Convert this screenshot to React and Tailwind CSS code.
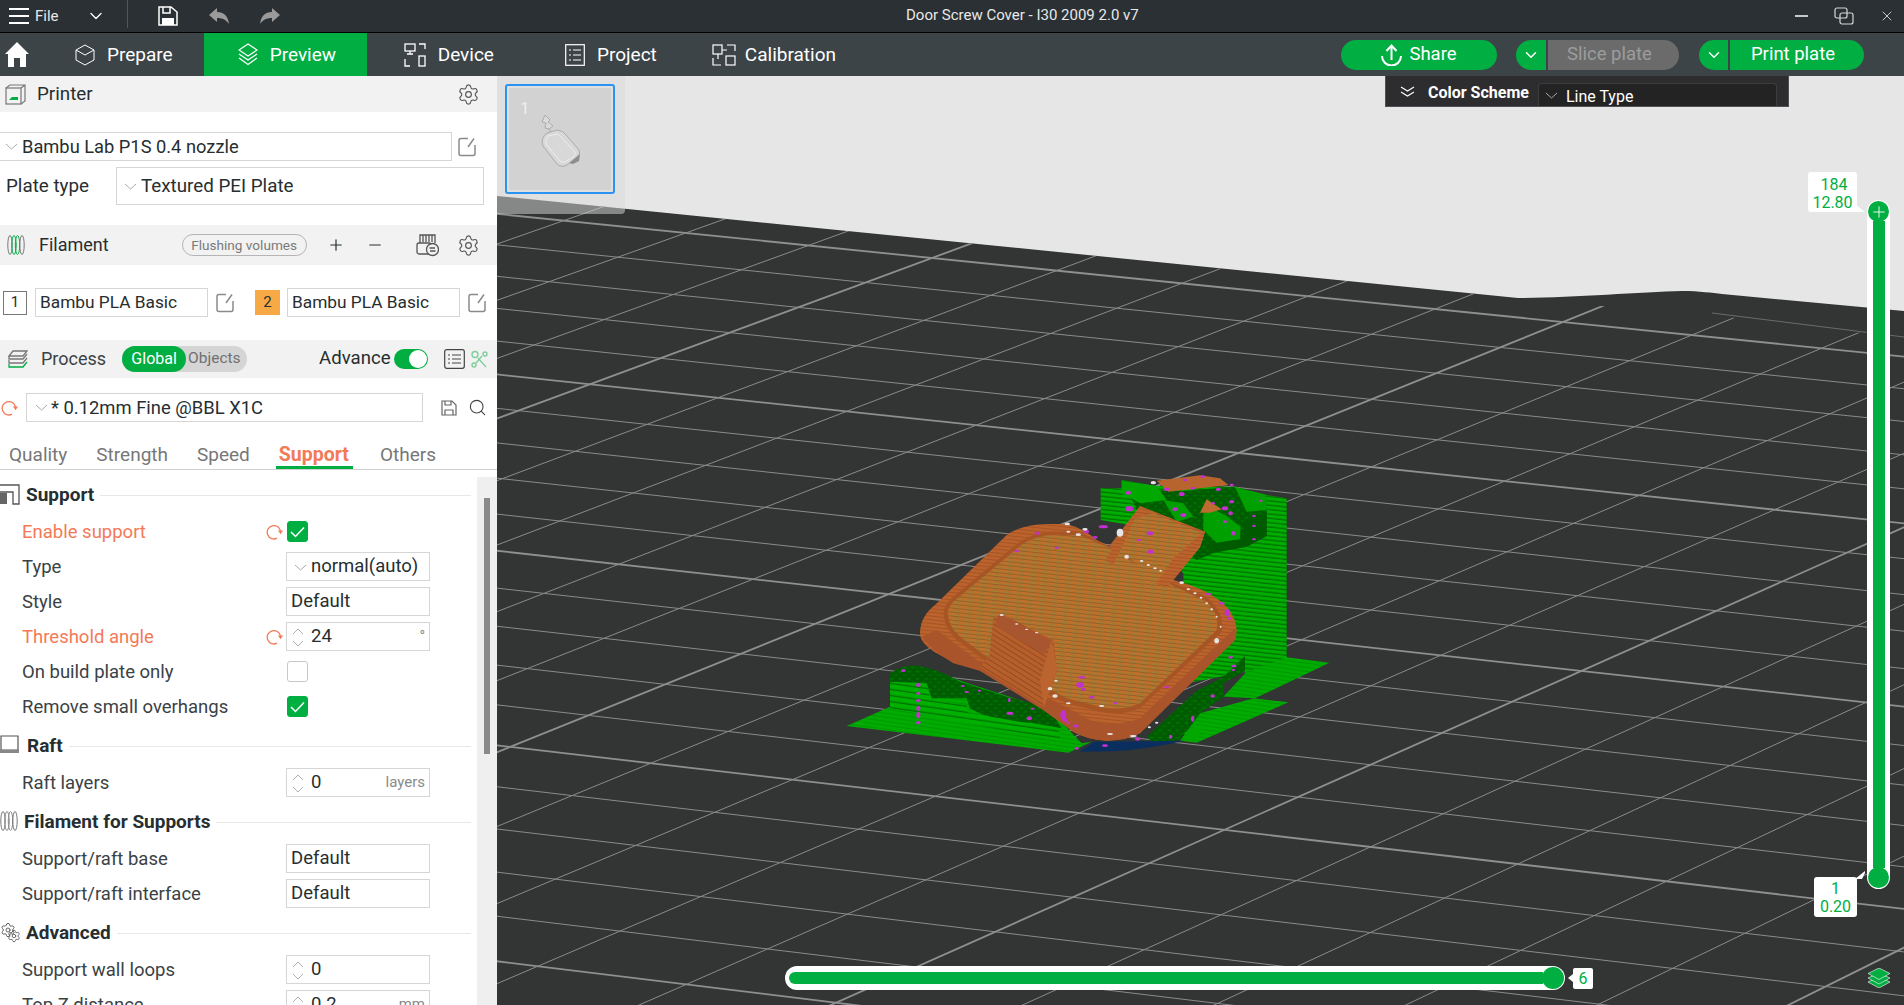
import React from 'react';
import { Settings, Search, Plus, Minus, ChevronDown, X } from 'lucide-react';

// floor grid: projective map fitted to the thick grid crossings, U/V count 5 cells
const project = (u, v) => {
    const U = u / 5;
    const V = v / 5;
    const w = 1 - 0.01708 * U - 0.03577 * V;
    return [(604.3 * U - 363.2 * V + 932) / w, (58.5 * U + 112.5 * V + 258) / w];
};

const gridLines = [];
for (let v = 0; v <= 36; v++) {
    const [x1, y1] = project(-30, v);
    const [x2, y2] = project(45, v);
    gridLines.push({ x1, y1, x2, y2, thick: v % 5 === 0 });
}
for (let u = -30; u <= 45; u++) {
    const [x1, y1] = project(u, -3);
    const [x2, y2] = project(u, 36);
    gridLines.push({ x1, y1, x2, y2, thick: u % 5 === 0 });
}

const magentaDots = [
    [925, 128, 8, 6], [928, 176, 12, 8], [1095, 90, 7, 4], [1148, 80, 7, 4], [1040, 118, 9, 5], [1085, 132, 9, 6], [1118, 115, 7, 4],
    [1195, 118, 8, 5], [1235, 105, 6, 4], [1235, 155, 8, 5], [1215, 175, 10, 6], [1180, 160, 5, 4], [1065, 178, 8, 6], [1090, 195, 9, 6],
    [1232, 190, 7, 6], [1215, 215, 6, 4], [1240, 250, 6, 7], [1302, 198, 6, 3], [1302, 228, 6, 3], [1302, 268, 6, 3], [1322, 152, 6, 3],
    [850, 230, 14, 5], [800, 245, 8, 5], [825, 262, 8, 4], [990, 250, 10, 6], [957, 270, 8, 3], [992, 305, 9, 6], [652, 250, 8, 4],
    [590, 303, 7, 4], [710, 293, 7, 3], [1165, 432, 10, 3], [1205, 460, 9, 4], [1222, 488, 8, 10], [1228, 505, 5, 5],
    [785, 682, 10, 4], [780, 705, 11, 8], [790, 718, 8, 4], [815, 742, 9, 4], [730, 795, 9, 14], [735, 810, 8, 5], [768, 828, 8, 5],
    [745, 818, 6, 3], [1040, 712, 8, 3], [886, 760, 6, 3], [1232, 622, 7, 4], [1242, 648, 8, 4], [1240, 660, 6, 3], [1178, 738, 7, 5],
    [1118, 806, 5, 9], [1052, 860, 5, 6], [953, 867, 8, 5], [855, 887, 9, 4], [770, 895, 6, 4],
    [295, 705, 7, 6], [295, 730, 6, 4], [295, 752, 7, 5], [295, 775, 6, 8], [295, 795, 6, 10], [295, 818, 7, 5], [250, 662, 7, 4],
    [428, 708, 6, 3], [440, 726, 7, 3], [568, 750, 4, 7], [570, 790, 11, 5], [628, 805, 8, 6], [638, 776, 6, 3], [478, 722, 5, 3]
];

const whiteDots = [
    [1000, 98, 8, 5], [900, 248, 10, 12], [742, 222, 8, 4], [795, 238, 8, 4], [775, 254, 8, 4], [745, 245, 6, 3], [920, 320, 7, 6],
    [965, 333, 5, 3], [985, 345, 5, 3], [1005, 355, 5, 3], [1022, 362, 4, 3], [1085, 398, 7, 4], [1105, 418, 5, 3], [1125, 430, 5, 3],
    [1143, 443, 4, 3], [1160, 460, 4, 3], [1175, 478, 4, 3], [1190, 500, 3, 3], [1202, 530, 3, 3], [1190, 572, 7, 8], [690, 716, 7, 5],
    [708, 692, 5, 3], [705, 738, 8, 5], [745, 760, 7, 3], [845, 768, 8, 3], [870, 852, 9, 3], [940, 858, 10, 3], [988, 832, 5, 3],
    [1010, 818, 5, 3], [545, 495, 6, 3], [650, 548, 5, 2], [620, 538, 5, 2], [590, 522, 5, 2]
];

const ModelView = () => (
    <g transform="translate(820 450) scale(0.33333)">
        {/* rear support tower */}
        <path d="M842 115 L905 115 L905 90 L1010 108 L1245 110 L1340 135 L1400 145 L1400 625 L1280 665 L1100 700 L1090 370 L960 230 L842 210 Z" fill="url(#greenStripe)" />
        <path d="M1400 622 L1528 638 L1305 745 L1210 740 L1280 665 Z" fill="url(#greenBase)" />
        <path d="M1300 745 L1405 757 L1130 878 L1080 872 L1140 790 Z" fill="url(#greenBase)" />
        <path d="M930 135 L1040 120 L1160 130 L1260 195 L1180 310 L1130 330 L1080 290 L960 200 Z" fill="url(#greenDark)" />
        <path d="M940 140 Q975 120 1010 130 L1240 110 L1340 180 L1340 258 L1280 290 L1180 308 L1150 290 L1100 200 L1000 150 Z" fill="url(#greenDark)" />
        <path d="M1150 190 L1185 180 L1215 195 L1262 230 L1260 268 L1190 278 L1150 240 Z" fill="#00a000" />
        <path d="M905 92 L1010 108 L1040 150 L960 160 L905 130 Z" fill="#00a800" />
        <path d="M1030 150 L1090 160 L1120 200 L1070 215 Z" fill="#00a000" />
        <path d="M1245 112 L1338 135 L1340 180 L1280 185 Z" fill="#00a000" />
        <path d="M1180 308 L1280 290 L1340 258 L1340 185 L1275 215 L1262 268 L1160 285 Z" fill="#005a00" />
        <path d="M1010 92 L1140 76 L1200 85 L1225 105 L1045 125 Z" fill="#b8642e" />
        <path d="M1140 188 L1160 148 L1205 178 L1170 188 Z" fill="#bd6c30" />
        {/* right lower dark support */}
        <path d="M980 860 L1130 722 L1210 680 L1275 618 L1275 662 L1210 700 L1212 740 L1140 790 L1100 842 L1080 870 L1000 880 Z" fill="url(#greenDark)" />
        <path d="M1090 850 L1150 820 L1130 875 Z" fill="#00a800" />
        {/* left support */}
        <path d="M80 828 L210 770 L210 672 L320 655 L430 695 L690 780 L785 880 L815 875 L745 908 Z" fill="url(#greenBase)" />
        <path d="M210 695 L320 700 L330 745 L440 765 L445 790 L715 830 L720 872 L210 775 Z" fill="url(#greenStripeWide)" />
        <path d="M208 672 Q250 640 300 648 Q360 660 420 695 Q500 720 560 740 Q640 760 690 780 L725 835 L640 820 Q590 815 540 805 Q490 800 450 775 L440 745 L335 745 L320 700 L210 695 Z" fill="url(#greenDark)" />
        {/* underside */}
        <path d="M778 905 L822 875 L1092 872 Q1000 895 880 904 Z" fill="#0a2f5f" />
        {/* cover: outer body */}
        <path d="M300 550 Q300 500 345 465 L560 255 Q600 225 680 222 L740 222 Q790 235 830 270 L868 288 L905 240 L960 168 L1155 245 L1140 292 L1060 390 L1078 395 Q1170 420 1220 470 Q1262 520 1245 570 L960 850 Q920 872 860 872 Q800 868 760 845 L670 780 L480 662 Q400 640 350 610 Q300 580 300 550 Z" fill="url(#orangeRim)" />
        <path d="M305 560 Q335 600 400 640 L480 662 L670 780 L760 845 Q800 868 860 872 Q920 872 960 850 L1245 570 Q1250 550 1245 535 L960 805 Q900 830 820 815 L470 630 L350 540 Z" fill="#a9542a" />
        {/* groove round the top face */}
        <path d="M372 500 Q365 475 395 445 L580 290 Q620 255 680 245 L780 245 L868 292 L1040 392 L1160 440 Q1215 490 1205 545 L960 775 Q900 800 840 785 L740 760 L495 632 L410 570 Q375 535 372 500 Z" fill="#a85526" />
        {/* cover: top face */}
        <path d="M385 500 Q378 480 400 455 L580 305 Q620 265 680 256 L780 256 L870 295 L1035 395 L1160 455 Q1200 495 1190 540 L960 760 Q900 785 840 770 L740 745 L500 620 L420 560 Q388 530 385 500 Z" fill="url(#orangeTop)" />
        {/* rear fin */}
        <path d="M855 330 L960 170 L1155 245 L1140 292 L1042 412 L1005 400 L1060 325 L945 225 L880 345 Z" fill="url(#orangeRim)" />
        <path d="M945 205 L1000 190 L1145 250 L1060 325 L1010 400 L930 325 L880 345 Z" fill="url(#orangeTop)" />
        {/* front fin */}
        <path d="M520 505 L545 492 L700 570 L712 660 L672 772 L480 652 L508 620 Z" fill="url(#orangeSide)" />
        <path d="M530 505 L545 495 L698 572 L670 612 L530 530 Z" fill="#a85630" />
        <path d="M695 570 L712 660 L672 772 L660 690 Z" fill="#bc6430" />
        {magentaDots.map(([cx, cy, rx, ry], i) => (
            <ellipse key={i} cx={cx} cy={cy} rx={rx} ry={ry} fill="#c32fd0" />
        ))}
        {whiteDots.map(([cx, cy, rx, ry], i) => (
            <ellipse key={i} cx={cx} cy={cy} rx={rx} ry={ry} fill="#e6e6e6" />
        ))}
    </g>
);

const PlateCanvas = () => (
    <svg className="absolute inset-0 h-full w-full" viewBox="497 76 1407 929">
        <defs>
            <pattern id="greenStripe" patternUnits="userSpaceOnUse" width="20" height="13" patternTransform="rotate(6)">
                <rect width="20" height="13" fill="#00ad00" />
                <rect y="9" width="20" height="4" fill="#007400" />
            </pattern>
            <pattern id="greenStripeWide" patternUnits="userSpaceOnUse" width="20" height="18" patternTransform="rotate(8)">
                <rect width="20" height="18" fill="#00b000" />
                <rect y="14" width="20" height="4" fill="#007000" />
            </pattern>
            <pattern id="greenBase" patternUnits="userSpaceOnUse" width="20" height="12" patternTransform="rotate(8)">
                <rect width="20" height="12" fill="#00ac00" />
                <rect y="10" width="20" height="2" fill="#008c00" />
            </pattern>
            <pattern id="greenDark" patternUnits="userSpaceOnUse" width="26" height="22">
                <rect width="26" height="22" fill="#005c00" />
                <rect x="2" y="3" width="10" height="4" fill="#007c00" />
                <rect x="15" y="13" width="9" height="4" fill="#007400" />
            </pattern>
            <pattern id="orangeTop" patternUnits="userSpaceOnUse" width="36" height="12" patternTransform="rotate(6)">
                <rect width="36" height="12" fill="#b4722c" />
                <rect width="20" height="4" fill="#c8702a" />
                <rect x="16" y="5" width="20" height="4" fill="#a07e38" />
                <rect y="10" width="36" height="2" fill="#875828" />
            </pattern>
            <pattern id="orangeRim" patternUnits="userSpaceOnUse" width="20" height="11" patternTransform="rotate(6)">
                <rect width="20" height="11" fill="#bb622d" />
                <rect y="9" width="20" height="2" fill="#9c4f22" />
            </pattern>
            <pattern id="orangeSide" patternUnits="userSpaceOnUse" width="18" height="14" patternTransform="rotate(32)">
                <rect width="18" height="14" fill="#b85e2a" />
                <rect y="12" width="18" height="2" fill="#7d4520" />
            </pattern>
            <clipPath id="bedClip">
                <path d="M497 196 L1518 298 L1602 306 L1710 315 L1904 338 L1904 1005 L497 1005 Z" />
            </clipPath>
        </defs>
        <rect x="497" y="76" width="1407" height="929" fill="#e6e6e6" />
        <path d="M497 196 L1518 298 C1570 298 1640 292 1682 291 C1700 291 1712 293 1722 294 L1904 311 L1904 1005 L497 1005 Z" fill="#333534" />
        <g clipPath="url(#bedClip)">
            {gridLines.map((l, i) => (
                <line key={i} x1={l.x1} y1={l.y1} x2={l.x2} y2={l.y2} stroke={l.thick ? '#8e8f8e' : '#8a8b8a'} strokeWidth={l.thick ? 1.8 : 1} />
            ))}
        </g>
        <line x1="1712" y1="313" x2="1904" y2="337" stroke="#6a6b6a" strokeWidth="1" />
        <ModelView />
    </svg>
);

const Chevron = ({ className = '' }) => (
    <svg className={`h-[7px] w-[13px] shrink-0 ${className}`} viewBox="0 0 13 7" fill="none" stroke="#a8a8a8" strokeWidth="1">
        <path d="M1 1 L6.5 6 L12 1" />
    </svg>
);

const EditIcon = () => (
    <svg className="h-[20px] w-[18px] shrink-0" viewBox="0 0 18 20" fill="none" stroke="#8a8a8a" strokeWidth="1.5">
        <path d="M10 1.5 H3 Q1 1.5 1 3.5 V16.5 Q1 18.5 3 18.5 H15 Q17 18.5 17 16.5 V8" />
        <path d="M16 1.5 L10 10" />
    </svg>
);

const RevertIcon = ({ className = '' }) => (
    <svg className={`h-[16px] w-[17px] shrink-0 ${className}`} viewBox="0 0 17 16" fill="none" stroke="#f37a57" strokeWidth="1.3">
        <path d="M11 14.2 A6.7 6.7 0 1 1 14.5 7" />
        <path d="M12 6.6 H17 L14.5 10.2 Z" fill="#f37a57" stroke="none" />
    </svg>
);

const SpoolIcon = ({ accent = '#8a8a8a', className = '' }) => (
    <svg className={`h-[22px] w-[18px] shrink-0 ${className}`} viewBox="0 0 18 22" fill="none" strokeWidth="1">
        <ellipse cx="3" cy="11" rx="2.2" ry="9.5" stroke="#777" />
        <ellipse cx="7" cy="11" rx="2.2" ry="9.5" stroke={accent} />
        <ellipse cx="10.5" cy="11" rx="2.2" ry="9.5" stroke={accent} />
        <ellipse cx="15" cy="11" rx="2.2" ry="9.5" stroke="#777" />
    </svg>
);

const Stepper = () => (
    <svg className="h-[22px] w-[14px] shrink-0" viewBox="0 0 14 22" fill="none" stroke="#b0b0b0" strokeWidth="1">
        <path d="M2 8 L7 3 L12 8" />
        <path d="M2 15 L7 20 L12 15" />
    </svg>
);

const CheckBox = ({ checked }) => (
    <div className={`ml-px flex h-[21px] w-[21px] items-center justify-center rounded-[3px] border ${checked ? 'border-[#00ae42] bg-[#00ae42]' : 'border-[#c8c8c8] bg-white'}`}>
        {checked && (
            <svg className="h-[12px] w-[15px]" viewBox="0 0 15 12" fill="none" stroke="white" strokeWidth="1.5">
                <path d="M1 6 L5.5 10.5 L14 1.5" />
            </svg>
        )}
    </div>
);

const Box = ({ children, className = '' }) => (
    <div className={`flex h-[29px] items-center border border-[#d6d6d6] bg-white ${className}`}>{children}</div>
);

const SettingRow = ({ label, changed, control }) => (
    <div className="flex h-[35px] items-center pl-[22px] pr-[47px]">
        <span className={`flex-1 pt-[2px] text-[18.5px] ${changed ? 'text-[#f37a57]' : 'text-[#3a4245]'}`}>{label}</span>
        <div className="flex w-[20px]">{changed && <RevertIcon />}</div>
        <div className="w-[144px]">{control}</div>
    </div>
);

const DefaultBox = ({ text = 'Default' }) => (
    <Box className="pl-[4px] pt-px text-[18.5px] text-[#262e30]">{text}</Box>
);

const SpinBox = ({ value, unit }) => (
    <Box className="pl-[4px] pr-[4px] text-[18.5px] text-[#262e30]">
        <Stepper />
        <span className="ml-[6px] flex-1 pt-px">{value}</span>
        {unit && <span className="text-[15px] text-[#8a8a8a]">{unit}</span>}
    </Box>
);

const SectionHead = ({ icon, title, gap = 'ml-[26px]' }) => (
    <div className="relative flex h-[41px] items-center pt-[3px] pr-[6px]">
        <div className="absolute left-0 top-[11px]">{icon}</div>
        <span className={`${gap} text-[19px] font-bold text-[#262e30]`}>{title}</span>
        <div className="ml-[6px] h-px flex-1 bg-[#e8e8e8]" />
    </div>
);

const PanelHead = ({ children, className = '' }) => (
    <div className={`flex items-center bg-[#f2f2f2] ${className}`}>{children}</div>
);

const Sidebar = () => (
    <aside className="flex h-full w-[497px] shrink-0 flex-col overflow-hidden bg-white text-[#262e30]">
        <PanelHead className="h-[36px]">
            <svg className="ml-[5px] h-[21px] w-[21px]" viewBox="0 0 21 21" fill="none" stroke="#777" strokeWidth="1.2">
                <rect x="1" y="4" width="15" height="16" />
                <path d="M1 4 L5 1 H20 V17 L16 20 M16 4 L20 1" />
                <path d="M4 16 L7 13 H13 V16 Z" fill="#00ae42" stroke="none" />
            </svg>
            <span className="ml-[11px] flex-1 text-[18.8px]">Printer</span>
            <Settings className="mr-[17px] h-[23px] w-[23px] text-[#555]" strokeWidth={1.2} />
        </PanelHead>
        <div className="mt-[20px] flex items-center">
            <Box className="-ml-px w-[453px] pl-[5px] text-[18.3px]">
                <Chevron className="mr-[4px]" />
                Bambu Lab P1S 0.4 nozzle
            </Box>
            <div className="ml-[6px]"><EditIcon /></div>
        </div>
        <div className="mt-[6px] flex items-center">
            <span className="ml-[6px] w-[110px] text-[18.8px]">Plate type</span>
            <Box className="h-[38px] w-[368px] pl-[7px] text-[18.8px]">
                <Chevron className="mr-[4px]" />
                Textured PEI Plate
            </Box>
        </div>
        <PanelHead className="mt-[20px] h-[40px]">
            <SpoolIcon accent="#00ae42" className="ml-[7px]" />
            <span className="-mt-[2px] ml-[14px] text-[18px]">Filament</span>
            <div className="ml-[73px] flex h-[22px] w-[125px] items-center justify-center rounded-full border border-[#b5b5b5] text-[13.6px] text-[#7a7a7a]">
                Flushing volumes
            </div>
            <Plus className="ml-[20px] h-[18px] w-[18px]" strokeWidth={1.6} />
            <Minus className="ml-[21px] h-[18px] w-[18px]" strokeWidth={1.6} />
            <svg className="ml-[32px] h-[24px] w-[23px]" viewBox="0 0 23 24" fill="none" stroke="#555" strokeWidth="1.3">
                <path d="M4 10 V2 H19 V10 M7 2 V9 M10 2 V9 M13 2 V9 M16 2 V9" />
                <rect x="1" y="10" width="14" height="11" rx="2" />
                <circle cx="16.5" cy="16.5" r="6" fill="#f2f2f2" />
                <path d="M13.5 15 H19 M19.5 18 H14" />
            </svg>
            <Settings className="ml-[18px] h-[23px] w-[23px] text-[#555]" strokeWidth={1.2} />
        </PanelHead>
        <div className="mt-[23px] flex h-[29px] items-center text-[17.3px]">
            <div className="ml-[3px] flex h-[24px] w-[24px] items-center justify-center border border-[#777] text-[15px]">1</div>
            <Box className="ml-[8px] w-[173px] pl-[4px]">Bambu PLA Basic</Box>
            <div className="ml-[8px]"><EditIcon /></div>
            <div className="ml-[21px] flex h-[25px] w-[25px] items-center justify-center bg-[#f7a945] text-[15px]">2</div>
            <Box className="ml-[7px] w-[173px] pl-[4px]">Bambu PLA Basic</Box>
            <div className="ml-[8px]"><EditIcon /></div>
        </div>
        <PanelHead className="mt-[23px] h-[38px]">
            <svg className="ml-[8px] h-[19px] w-[20px]" viewBox="0 0 20 19" fill="none" strokeWidth="1.3">
                <path d="M1 6 L5 1 H19 L15 6 Z" stroke="#777" />
                <path d="M1 6 V9 H15 L19 4 M1 10 V13 H15 L19 8" stroke="#777" />
                <path d="M1 14 V17 H15 L19 12" stroke="#00ae42" />
            </svg>
            <span className="-mt-[2px] ml-[13px] text-[18px] text-[#3a4245]">Process</span>
            <div className="ml-[16px] flex h-[26px] w-[125px] items-center rounded-full bg-[#d5d5d5] text-[16px]">
                <div className="flex h-full w-[64px] items-center justify-center rounded-full bg-[#00ae42] text-white">Global</div>
                <span className="ml-[2px] text-[15.5px] text-[#707070]">Objects</span>
            </div>
            <span className="ml-[72px] text-[18.6px]">Advance</span>
            <div className="ml-[3px] flex h-[20px] w-[34px] items-center justify-end rounded-full bg-[#00ae42] pr-[1px]">
                <div className="h-[18px] w-[18px] rounded-full bg-white" />
            </div>
            <svg className="ml-[16px] h-[20px] w-[21px]" viewBox="0 0 21 20" fill="none" stroke="#444" strokeWidth="1.2">
                <rect x="0.7" y="0.7" width="19.6" height="18.6" rx="2" />
                <path d="M4 6 H6 M8 6 H17 M4 10 H6 M8 10 H17 M4 14 H6 M8 14 H17" />
            </svg>
            <svg className="ml-[5px] h-[19px] w-[18px]" viewBox="0 0 18 19" fill="none" stroke="#7fcf9c" strokeWidth="1.4">
                <circle cx="5" cy="4.5" r="3" />
                <circle cx="15" cy="4" r="2" />
                <circle cx="4" cy="15" r="2" />
                <path d="M8 8 L16 17 M12 6 L6 13" />
            </svg>
        </PanelHead>
        <div className="mt-[15px] flex items-center">
            <RevertIcon className="ml-px" />
            <Box className="ml-[8px] w-[397px] pl-[8px] text-[18.4px]">
                <Chevron className="mr-[3px]" />
                * 0.12mm Fine @BBL X1C
            </Box>
            <svg className="ml-[18px] h-[16px] w-[16px]" viewBox="0 0 16 16" fill="none" stroke="#666" strokeWidth="1.2">
                <path d="M1 1 H11 L15 5 V15 H1 Z M4 1 V5 H10 V1 M4 15 V10 H12 V15" />
            </svg>
            <Search className="ml-[11px] h-[19px] w-[19px] text-[#444]" strokeWidth={1.4} />
        </div>
        <div className="flex h-[48px] shrink-0 items-end gap-[29px] border-b border-[#d0d0d0] pl-[9px] text-[19px] text-[#777]">
            <span>Quality</span>
            <span>Strength</span>
            <span>Speed</span>
            <span className="relative text-[19.5px] font-bold text-[#f37a57]">
                Support
                <span className="absolute -left-[3px] -right-[4px] bottom-0 h-[3px] bg-[#00ae42]" />
            </span>
            <span className="ml-[2px]">Others</span>
        </div>
        <div className="flex min-h-0 flex-1">
            <div className="min-w-0 flex-1 pt-[3px]">
                <SectionHead
                    title="Support"
                    icon={
                        <svg className="h-[21px] w-[20px]" viewBox="0 0 20 21" fill="none" stroke="#555" strokeWidth="1.3">
                            <path d="M0 1 H19 V20 H13 V8 H0" />
                            <rect x="0" y="9" width="7" height="11" fill="#666" stroke="none" />
                        </svg>
                    }
                />
                <SettingRow label="Enable support" changed control={<CheckBox checked />} />
                <SettingRow
                    label="Type"
                    control={
                        <Box className="pl-[7px] pt-px text-[18.5px] text-[#262e30]">
                            <Chevron className="mr-[4px]" />
                            normal(auto)
                        </Box>
                    }
                />
                <SettingRow label="Style" control={<DefaultBox />} />
                <SettingRow label="Threshold angle" changed control={<SpinBox value="24" unit="°" />} />
                <SettingRow label="On build plate only" control={<CheckBox />} />
                <SettingRow label="Remove small overhangs" control={<CheckBox checked />} />
                <SectionHead
                    title="Raft"
                    gap="ml-[27px]"
                    icon={
                        <svg className="h-[20px] w-[20px]" viewBox="0 0 20 20" fill="none" stroke="#555" strokeWidth="1.2">
                            <path d="M1 1 H18 V15 H1 Z" />
                            <rect x="0" y="15" width="19" height="3" fill="#888" stroke="none" />
                        </svg>
                    }
                />
                <SettingRow label="Raft layers" control={<SpinBox value="0" unit="layers" />} />
                <SectionHead title="Filament for Supports" gap="ml-[24px]" icon={<SpoolIcon className="mt-[-1px]" />} />
                <SettingRow label="Support/raft base" control={<DefaultBox />} />
                <SettingRow label="Support/raft interface" control={<DefaultBox />} />
                <SectionHead
                    title="Advanced"
                    gap="ml-[26px]"
                    icon={
                        <div className="relative h-[21px] w-[21px] text-[#555]">
                            <Settings className="absolute left-0 top-0 h-[16px] w-[16px]" strokeWidth={1.4} />
                            <Settings className="absolute bottom-0 right-0 h-[14px] w-[14px]" strokeWidth={1.4} />
                        </div>
                    }
                />
                <SettingRow label="Support wall loops" control={<SpinBox value="0" />} />
                <SettingRow label="Top Z distance" control={<SpinBox value="0.2" unit="mm" />} />
            </div>
            <div className="mt-[7px] w-[20px] shrink-0 bg-[#efefef] pl-[7px] pt-[21px]">
                <div className="h-[256px] w-[6px] bg-[#8a8a8a]" />
            </div>
        </div>
    </aside>
);

const NavTab = ({ icon, label, active, className = '', gap = 'ml-[12px]' }) => (
    <div className={`flex h-full items-center ${active ? 'bg-[#00ae42]' : ''} ${className}`}>
        {icon}
        <span className={`${gap} pt-[2px] text-[19px] text-white`}>{label}</span>
    </div>
);

const TopBars = () => (
    <>
        <div className="relative flex h-[33px] shrink-0 items-center border-b border-black bg-[#2a3033] text-[#e8e8e8]">
            <svg className="ml-[9px] h-[20px] w-[20px]" viewBox="0 0 20 20" stroke="white" strokeWidth="1.8">
                <path d="M0 3 H20 M0 10 H20 M0 17 H20" />
            </svg>
            <span className="ml-[6px] text-[15px]">File</span>
            <ChevronDown className="ml-[27px] h-[20px] w-[20px] text-white" strokeWidth={1.6} />
            <div className="ml-[21px] h-[28px] w-px self-start bg-[#555]" />
            <svg className="ml-[30px] h-[20px] w-[20px]" viewBox="0 0 20 20" fill="none" stroke="white" strokeWidth="1.5">
                <path d="M1 1 H13 L19 6 V19 H1 Z M5 1 V7 H12 V1" />
                <rect x="4" y="12" width="12" height="7" fill="white" stroke="none" />
            </svg>
            <svg className="ml-[31px] h-[17px] w-[20px]" viewBox="0 0 20 17" fill="#9a9a9a">
                <path d="M0 7 L8 0 V4 C15 4 19 8 20 16 C17 12 14 10 8 10 V14 Z" />
            </svg>
            <svg className="ml-[31px] h-[17px] w-[20px]" viewBox="0 0 20 17" fill="#9a9a9a">
                <path d="M20 7 L12 0 V4 C5 4 1 8 0 16 C3 12 6 10 12 10 V14 Z" />
            </svg>
            <span className="absolute left-[906px] top-[4px] text-[15px]">Door Screw Cover - I30 2009 2.0 v7</span>
            <div className="ml-auto flex items-center">
                <div className="mr-[26px] h-[1.5px] w-[13px] bg-[#c8c8c8]" />
                <svg className="mr-[25px] h-[18px] w-[20px]" viewBox="0 0 20 18" fill="none" stroke="#d8d8d8" strokeWidth="1.2">
                    <rect x="1" y="1" width="12" height="10" rx="2" />
                    <rect x="6" y="6" width="13" height="11" rx="2" />
                </svg>
                <X className="mr-[9px] h-[16px] w-[16px] text-[#e0e0e0]" strokeWidth={1.3} />
            </div>
        </div>
        <div className="flex h-[43px] shrink-0 items-center bg-[#3c4448]">
            <svg className="ml-[5px] h-[25px] w-[24px]" viewBox="0 0 24 25" fill="white">
                <path d="M12 0 L24 12 H21 V25 H15 V16 H9 V25 H3 V12 H0 Z" />
            </svg>
            <NavTab
                className="ml-[46px]"
                label="Prepare"
                icon={
                    <svg className="h-[22px] w-[20px]" viewBox="0 0 20 22" fill="none" stroke="white" strokeWidth="1">
                        <path d="M10 1 L19 6 V16 L10 21 L1 16 V6 Z M1 6 L10 11 L19 6" />
                    </svg>
                }
            />
            <NavTab
                active
                className="ml-[31px] w-[163px] pl-[34px]"
                label="Preview"
                icon={
                    <svg className="h-[23px] w-[20px]" viewBox="0 0 20 23" fill="none" stroke="white" strokeWidth="1.3">
                        <path d="M10 1 L19 7 L10 13 L1 7 Z M1 11 L10 17 L19 11 M1 15 L10 21.5 L19 15" />
                    </svg>
                }
            />
            <NavTab
                className="ml-[37px]"
                label="Device"
                icon={
                    <svg className="h-[24px] w-[22px]" viewBox="0 0 22 24" fill="none" stroke="white" strokeWidth="1.3">
                        <rect x="1" y="1" width="10" height="7" />
                        <path d="M6 8 V11 M3 11 H9 M15 1 H21 V6 M1 16 V23 H6" />
                        <rect x="15" y="13" width="6" height="10" />
                    </svg>
                }
            />
            <NavTab
                className="ml-[71px]"
                label="Project"
                icon={
                    <svg className="h-[22px] w-[20px]" viewBox="0 0 20 22" fill="none" stroke="white" strokeWidth="1.2">
                        <rect x="0.7" y="0.7" width="18.6" height="20.6" />
                        <path d="M4 6 H6 M8 6 H16 M4 11 H6 M8 11 H16 M4 16 H6 M8 16 H16" />
                    </svg>
                }
            />
            <NavTab
                className="ml-[55px]"
                label="Calibration"
                gap="ml-[9px]"
                icon={
                    <svg className="h-[22px] w-[24px]" viewBox="0 0 24 22" fill="none" stroke="white" strokeWidth="1.2">
                        <rect x="1" y="1" width="9" height="9" />
                        <rect x="14" y="12" width="9" height="9" />
                        <path d="M15 1 H23 V7 M1 14 V21 H9 M10 6 H15 M6 10 V15" />
                    </svg>
                }
            />
            <div className="ml-auto flex items-center pr-[40px] text-[18.5px] text-white">
                <div className="flex h-[30px] w-[156px] items-center justify-center rounded-full bg-[#00ae42]">
                    <svg className="mr-[7px] h-[22px] w-[21px]" viewBox="0 0 21 22" fill="none" stroke="white" strokeWidth="2">
                        <path d="M10.5 16 V2 M5.5 7 L10.5 1.5 L15.5 7" />
                        <path d="M1 12 A9.5 9.5 0 0 0 20 12" />
                    </svg>
                    Share
                </div>
                <div className="ml-[19px] flex h-[30px] w-[30px] items-center justify-center rounded-l-full bg-[#00ae42]">
                    <ChevronDown className="h-[18px] w-[18px]" strokeWidth={2} />
                </div>
                <div className="ml-[2px] flex h-[30px] w-[131px] items-center justify-center rounded-r-full bg-[#6b6b6b] pr-[8px] text-[#9c9c9c]">Slice plate</div>
                <div className="ml-[20px] flex h-[30px] w-[29px] items-center justify-center rounded-l-full bg-[#00ae42]">
                    <ChevronDown className="h-[18px] w-[18px]" strokeWidth={2} />
                </div>
                <div className="ml-[2px] flex h-[30px] w-[134px] items-center justify-center rounded-r-full bg-[#00ae42] pr-[8px]">Print plate</div>
            </div>
        </div>
    </>
);

const Overlays = () => (
    <>
        {/* plate thumbnail, offsets are from the canvas corner (497,76) */}
        <div className="absolute left-0 top-0 h-[138px] w-[128px] rounded-br-[4px] bg-[#dadada]/50 p-[8px]">
            <div className="relative h-[110px] w-[110px] rounded-[3px] border-2 border-[#2b93f0] p-[2px]">
                <div className="relative h-full w-full bg-[#d2d2d2]">
                    <span className="absolute left-[11px] top-[8px] text-[17px] text-[#eeeeee]">1</span>
                    <svg className="absolute left-[28px] top-[26px] h-[54px] w-[46px]" viewBox="0 0 46 54" fill="none" stroke="#a6a6a6" strokeWidth="0.9">
                        <path d="M8 1 L13 6 L11 8 L16 12 L12 15 L14 18" fill="#dcdcdc" />
                        <path d="M8 1 L5 8 L9 9 L8 14 L12 15" fill="#dcdcdc" />
                        <path d="M10 19 L20 16 Q26 16 30 22 L42 36 Q44 40 40 44 L30 51 Q24 54 20 50 L6 32 Q3 24 10 19 Z" fill="#d8d8d8" />
                        <path d="M11 22 L21 20 L38 38 Q39 41 36 43 L28 48 Q24 49 22 46 L9 30 Q8 25 11 22 Z" stroke="#eeeeee" />
                        <path d="M32 49 L43 40 L42 47 L36 50 Z" fill="#8e8e8e" stroke="none" />
                    </svg>
                </div>
            </div>
        </div>
        <div className="absolute left-[888px] top-0 flex h-[31px] w-[404px] items-center border border-t-0 border-[#505055] bg-[#2d2d2f] text-[16px] text-white">
            <svg className="ml-[14px] h-[11px] w-[15px]" viewBox="0 0 15 11" fill="none" stroke="white" strokeWidth="1.1">
                <path d="M1 1 L7.5 5 L14 1 M1 6 L7.5 10 L14 6" />
            </svg>
            <span className="ml-[13px] pt-[4px] font-bold">Color Scheme</span>
            <div className="ml-[9px] flex h-[23px] w-[239px] items-center self-end rounded-t-[4px] border border-b-0 border-[#3d3d3d] bg-[#232323] pl-[6px]">
                <Chevron />
                <span className="ml-[8px] pt-[3px]">Line Type</span>
            </div>
        </div>
        {/* vertical layer slider */}
        <div className="absolute left-[1370px] top-[124px] flex h-[689px] w-[23px] flex-col items-center rounded-full bg-white py-[1px]">
            <div className="flex h-[21px] w-[21px] shrink-0 items-center justify-center rounded-full bg-[#00ae42]">
                <Plus className="h-[18px] w-[18px] text-white" strokeWidth={1.2} />
            </div>
            <div className="-my-px w-[12px] flex-1 bg-[#00ae42]" />
            <div className="h-[21px] w-[21px] shrink-0 rounded-full bg-[#00ae42]" />
        </div>
        <div className="absolute left-[1311px] top-[96px] flex h-[40px] w-[49px] flex-col items-center justify-center rounded-[3px] bg-white pt-[3px] text-[16px] leading-[18px] text-[#00ae42]">
            <span className="pl-[3px]">184</span>
            <span>12.80</span>
        </div>
        <svg className="absolute left-[1358px] top-[128px] h-[10px] w-[10px]" viewBox="0 0 10 10" fill="white">
            <path d="M0 0 V8 H10 Z" />
        </svg>
        <div className="absolute left-[1317px] top-[801px] flex h-[40px] w-[43px] flex-col items-center justify-center rounded-[3px] bg-white pt-px text-[16px] leading-[18px] text-[#00ae42]">
            <span>1</span>
            <span>0.20</span>
        </div>
        <svg className="absolute left-[1358px] top-[795px] h-[8px] w-[10px]" viewBox="0 0 10 8" fill="white">
            <path d="M0 8 L10 0 V2 L7 8 Z" />
        </svg>
        {/* horizontal move slider */}
        <div className="absolute left-[288px] top-[890px] flex h-[24px] w-[780px] items-center rounded-full bg-white pl-[4px] pr-px">
            <div className="-mr-px h-[12px] flex-1 rounded-l-full bg-[#00ae42]" />
            <div className="h-[22px] w-[22px] shrink-0 rounded-full bg-[#00ae42]" />
        </div>
        <div className="absolute left-[1076px] top-[892px] flex h-[21px] w-[20px] items-center justify-center rounded-[2px] bg-white text-[16px] text-[#00ae42]">6</div>
        <svg className="absolute left-[1071px] top-[898px] h-[8px] w-[5px]" viewBox="0 0 5 8" fill="white">
            <path d="M5 0 V8 L0 4 Z" />
        </svg>
        <svg className="absolute left-[1371px] top-[892px] h-[20px] w-[22px]" viewBox="0 0 22 20" fill="#00ae42" stroke="white" strokeWidth="0.6">
            <path d="M11 9 L22 14 L11 20 L0 14 Z" />
            <path d="M11 5 L22 10 L11 16 L0 10 Z" />
            <path d="M11 0 L22 5.5 L11 11.5 L0 5.5 Z" />
        </svg>
    </>
);

const App = () => {
    return (
        <div className="flex h-[1005px] w-[1904px] flex-col overflow-hidden font-[Roboto,sans-serif]">
            <TopBars />
            <div className="flex min-h-0 flex-1">
                <Sidebar />
                <div className="relative min-w-0 flex-1 overflow-hidden">
                    <PlateCanvas />
                    <Overlays />
                </div>
            </div>
        </div>
    );
};

export default App;
